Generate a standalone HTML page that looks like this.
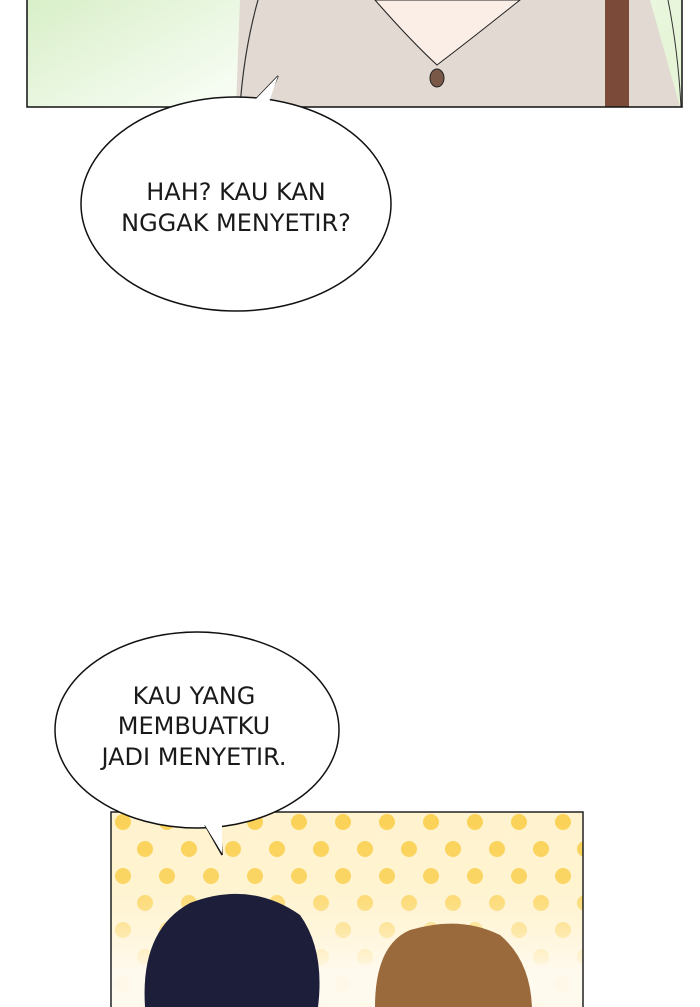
<!DOCTYPE html>
<html><head><meta charset="utf-8"><style>
html,body{margin:0;padding:0;background:#fff;width:700px;height:1007px;overflow:hidden}
svg{display:block}
text{font-family:"DejaVu Sans","Liberation Sans",sans-serif;font-size:24px;fill:#1a1a1a;font-weight:normal}
</style></head><body>
<svg width="700" height="1007" viewBox="0 0 700 1007" xmlns="http://www.w3.org/2000/svg">
<defs>
<linearGradient id="g1" x1="0" y1="0" x2="1" y2="0.3">
<stop offset="0" stop-color="#d8efc8"/><stop offset="0.5" stop-color="#f6fcf2"/><stop offset="1" stop-color="#e6f5d8"/>
</linearGradient>
<pattern id="dots" width="44" height="54" patternUnits="userSpaceOnUse" x="112" y="813">
<circle cx="11" cy="9" r="8" fill="#fbd257"/><circle cx="33" cy="36" r="8" fill="#fbd257"/>
</pattern>
<linearGradient id="fade" x1="0" y1="0" x2="0" y2="1">
<stop offset="0" stop-color="#fff6d8" stop-opacity="0"/><stop offset="0.35" stop-color="#fff6d8" stop-opacity="0.1"/><stop offset="0.8" stop-color="#fffaf0" stop-opacity="0.95"/>
</linearGradient>
</defs>
<rect x="27" y="0" width="655" height="107" fill="url(#g1)"/>
<path d="M240 0 L650 0 L680 107 L236 107 Z" fill="#e2d9d2"/>
<path d="M375 0 Q410 40 437 65 Q470 40 520 0 Z" fill="#fbeee6" stroke="#222" stroke-width="1"/>
<rect x="605" y="0" width="24" height="107" fill="#7b4a38"/>
<ellipse cx="437" cy="78" rx="7" ry="9" fill="#7a5848" stroke="#222" stroke-width="1"/>
<path d="M258 0 Q244 50 240 107" fill="none" stroke="#333" stroke-width="1.2"/>
<path d="M668 0 Q678 50 681 107" fill="none" stroke="#333" stroke-width="1"/>
<rect x="27" y="-2" width="655" height="109" fill="none" stroke="#111" stroke-width="1.5"/>
<path d="M255 100 L278 76 L266 104 Z" fill="#fff" stroke="#111" stroke-width="1.5"/>
<ellipse cx="236" cy="204" rx="155" ry="107" fill="#fff" stroke="#111" stroke-width="1.5"/>
<path d="M253 102 L278 76 L268 105 Z" fill="#fff"/>
<text x="236" y="200" text-anchor="middle">HAH? KAU KAN</text>
<text x="236" y="231" text-anchor="middle">NGGAK MENYETIR?</text>
<rect x="111" y="812" width="472" height="200" fill="#fff3cf"/>
<rect x="111" y="812" width="472" height="200" fill="url(#dots)"/>
<rect x="111" y="812" width="472" height="200" fill="url(#fade)"/>
<path d="M145 1007 Q140 930 190 903 Q250 880 300 915 Q325 950 318 1007 Z" fill="#1d1f3a"/>
<path d="M375 1007 Q375 945 410 930 Q460 915 500 935 Q530 960 532 1007 Z" fill="#9a6a3c"/>
<rect x="111" y="812" width="472" height="200" fill="none" stroke="#222" stroke-width="1.5"/>
<ellipse cx="197" cy="730" rx="142" ry="98" fill="#fff" stroke="#111" stroke-width="1.5"/>
<path d="M205 825 L222 855 L220 823" fill="#fff" stroke="#111" stroke-width="1.5"/>
<path d="M203 822 L222 853 L222 820 Z" fill="#fff"/>
<text x="194" y="704" text-anchor="middle">KAU YANG</text>
<text x="194" y="734" text-anchor="middle">MEMBUATKU</text>
<text x="194" y="765" text-anchor="middle">JADI MENYETIR.</text>
</svg>
</body></html>
